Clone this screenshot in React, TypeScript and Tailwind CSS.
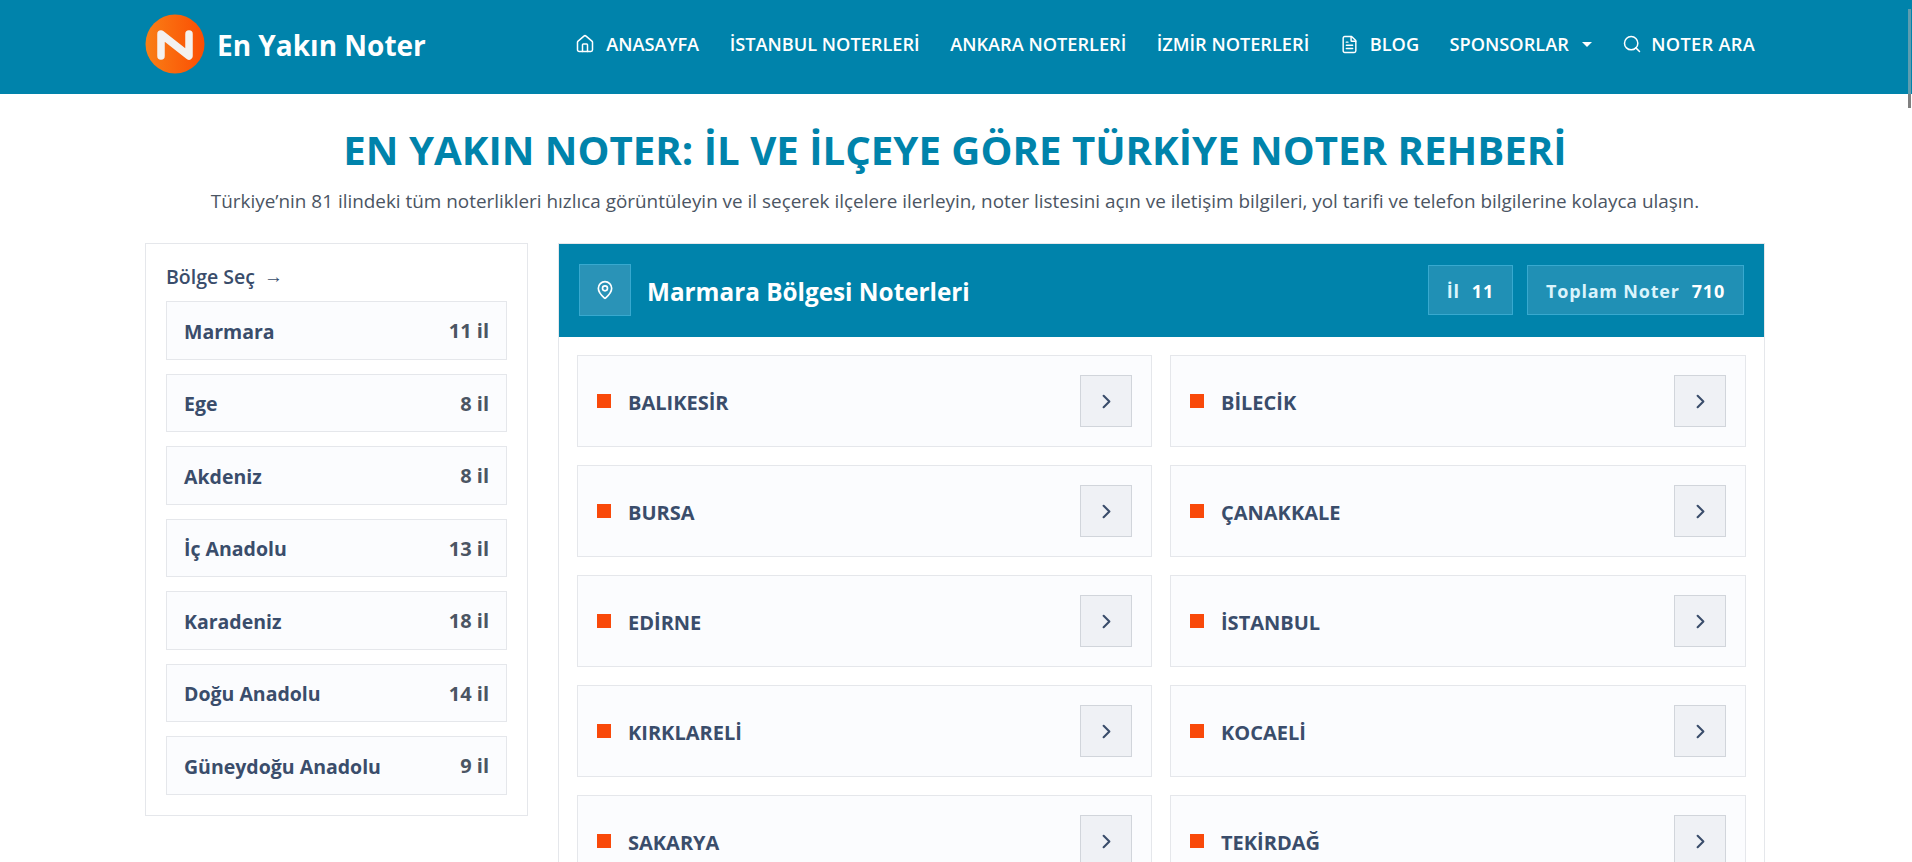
import { House, FileText, Search, MapPin, ChevronRight } from "lucide-react";

const regions = [
  ["Marmara", "11 il"],
  ["Ege", "8 il"],
  ["Akdeniz", "8 il"],
  ["İç Anadolu", "13 il"],
  ["Karadeniz", "18 il"],
  ["Doğu Anadolu", "14 il"],
  ["Güneydoğu Anadolu", "9 il"],
];
const cities = ["BALIKESİR", "BİLECİK", "BURSA", "ÇANAKKALE", "EDİRNE", "İSTANBUL", "KIRKLARELİ", "KOCAELİ", "SAKARYA", "TEKİRDAĞ"];

function NavItem({ label, icon }: { label: string; icon?: React.ReactNode }) {
  return (
    <a className="flex items-center gap-[11px] whitespace-nowrap text-[18.2px] font-semibold text-white">
      {icon}
      {label}
    </a>
  );
}

export default function App() {
  return (
    <div className="relative h-[862px] overflow-hidden bg-white font-['Open_Sans','Noto_Sans',sans-serif] text-[#374151]">
      <header className="h-[94px] bg-[#0083ab]">
        <div className="ml-[145px] flex h-[90px] w-[1620px] items-center justify-between pr-[10px]">
          <div className="flex items-center gap-[12px]">
            <svg width="60" height="60" viewBox="0 0 60 60" className="-translate-y-px">
              <defs>
                <linearGradient id="lg" x1="0" x2="1" y1="0" y2="0">
                  <stop offset="0" stopColor="#f97f16" />
                  <stop offset="1" stopColor="#fb4d03" />
                </linearGradient>
              </defs>
              <circle cx="30" cy="30" r="29.5" fill="url(#lg)" />
              <path d="M16 42V20L44 42V20" fill="none" stroke="#f3f1ef" strokeWidth="7.5" strokeLinejoin="round" strokeLinecap="round" />
            </svg>
            <span className="text-[28px] font-bold leading-none text-white">En Yakın Noter</span>
          </div>
          <nav className="mb-[1px] flex items-center gap-[30.5px]">
            <NavItem label="ANASAYFA" icon={<House size={20} strokeWidth={1.8} />} />
            <NavItem label="İSTANBUL NOTERLERİ" />
            <NavItem label="ANKARA NOTERLERİ" />
            <NavItem label="İZMİR NOTERLERİ" />
            <NavItem label="BLOG" icon={<FileText size={19} strokeWidth={1.8} />} />
            <a className="flex items-center gap-[13px] whitespace-nowrap text-[18.2px] font-semibold text-white">
              SPONSORLAR
              <span className="h-0 w-0 border-x-[5px] border-t-[5px] border-x-transparent border-t-white" />
            </a>
            <a className="flex items-center gap-[9px] whitespace-nowrap text-[18.2px] font-semibold tracking-[0.3px] text-white">
              <Search size={20} strokeWidth={1.8} />
              NOTER ARA
            </a>
          </nav>
        </div>
      </header>

      <section className="pt-[29px] text-center">
        <h1 className="pr-[2px] text-[40.2px] font-bold leading-[54px] text-[#0083ab]">EN YAKIN NOTER: İL VE İLÇEYE GÖRE TÜRKİYE NOTER REHBERİ</h1>
        <p className="mt-[11px] pr-[2px] text-[18.9px] leading-[27px] text-[#4b5563]">
          Türkiye’nin 81 ilindeki tüm noterlikleri hızlıca görüntüleyin ve il seçerek ilçelere ilerleyin, noter listesini açın ve iletişim bilgileri, yol tarifi ve telefon bilgilerine kolayca ulaşın.
        </p>
      </section>

      <main className="ml-[145px] mt-[28px] flex w-[1620px] items-start gap-[30px]">
        <aside className="w-[383px] shrink-0 border border-[#e5e7eb] bg-white p-[20px]">
          <div className="mb-[8px] h-[29px] -translate-y-[2px] text-[19.5px] font-semibold leading-[29px] text-[#3a4d6b]">
            Bölge Seç<span className="ml-[9px] inline-block -translate-y-[1px] font-['Liberation_Sans',sans-serif] text-[19px] font-normal leading-none">→</span>
          </div>
          <div className="flex flex-col gap-[14px]">
            {regions.map(([n, c]) => (
              <div key={n} className="flex h-[58.5px] items-center justify-between border border-[#e5e7eb] bg-[#fbfcfe] px-[17px] pt-[2px] text-[19.5px] font-bold">
                <span className="text-[#3a4d6b]">{n}</span>
                <span className="text-[20px] text-[#4b5563]">{c}</span>
              </div>
            ))}
          </div>
        </aside>
        <div className="min-w-0 flex-1 border-x border-t border-[#e5e7eb]">
          <div className="flex h-[93px] items-center justify-between bg-[#0083ab] px-[20px] pb-[1px]">
            <div className="flex items-center gap-[16px]">
              <div className="flex h-[52px] w-[52px] items-center justify-center border border-[#38a9cf] bg-[#2a93b7] text-white">
                <MapPin size={20} strokeWidth={2} />
              </div>
              <h2 className="pt-[4px] text-[24.3px] font-bold text-white">Marmara Bölgesi Noterleri</h2>
            </div>
            <div className="flex gap-[14px]">
              <div className="flex h-[50px] items-center gap-[12px] border border-[#38a9cf] bg-[#2090b5] px-[18px] pt-[3px] text-[18px] font-bold tracking-[0.8px] text-[#dbf4fc]">
                <span>İl</span><span className="text-white">11</span>
              </div>
              <div className="flex h-[50px] items-center gap-[12px] border border-[#38a9cf] bg-[#2090b5] px-[18px] pt-[3px] text-[18px] font-bold tracking-[0.8px] text-[#dbf4fc]">
                <span>Toplam Noter</span><span className="text-white">710</span>
              </div>
            </div>
          </div>
          <div className="grid grid-cols-[575px_576px] gap-[18px] pl-[18px] pt-[18px]">
            {cities.map((c) => (
              <div key={c} className="flex h-[92px] items-center justify-between border border-[#e5e7eb] bg-[#fbfcfe] pl-[19px] pr-[19px]">
                <div className="flex items-center gap-[17px]">
                  <span className="h-[14px] w-[14px] bg-[#f9490a]" />
                  <span className="translate-y-[2px] text-[20px] font-bold text-[#3a4d6b]">{c}</span>
                </div>
                <div className="flex h-[52px] w-[52px] items-center justify-center border border-[#d1d5db] bg-[#eff1f5] text-[#3a4d6b]">
                  <ChevronRight size={23} strokeWidth={2.2} />
                </div>
              </div>
            ))}
          </div>
        </div>
      </main>

      <div className="absolute right-px top-[9px] w-[3px]">
        <div className="h-[85px] bg-[#5d9db0]" />
        <div className="h-[14px] bg-[#808080]" />
      </div>
    </div>
  );
}
